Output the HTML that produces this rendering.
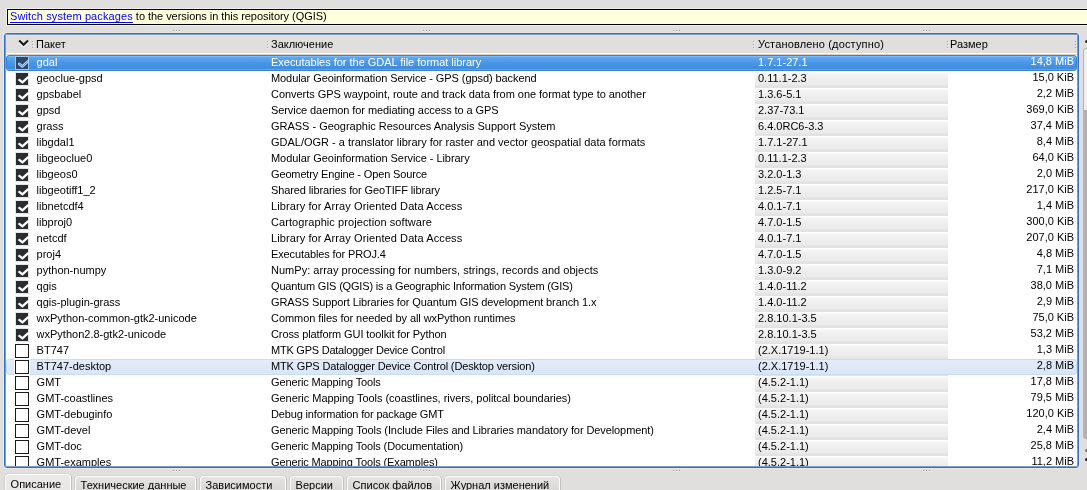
<!DOCTYPE html>
<html><head><meta charset="utf-8">
<style>
html,body{margin:0;padding:0;}
body{width:1087px;height:490px;overflow:hidden;position:relative;background:#e0dfde;font-family:"Liberation Sans",sans-serif;font-size:11px;color:#000;}
#root{position:absolute;left:0;top:0;width:1087px;height:490px;will-change:transform;overflow:hidden;}
.banner{position:absolute;left:7px;top:9px;width:1100px;height:14px;border:1px solid #000;background:#ffffdd;box-shadow:0 0 0 1px rgba(255,255,255,0.45);}
.banner span{position:absolute;left:2px;top:-1px;line-height:14px;white-space:nowrap;}
.banner a{color:#0000ff;text-decoration:underline;text-underline-offset:2px;}
.bsh{position:absolute;left:0;top:25px;width:1087px;height:1px;background:#ecebea;}
.dots{position:absolute;height:2px;width:8px;}
.dots i{position:absolute;top:0;width:1px;height:1px;background:#9e9c9a;box-shadow:0 1px 0 #f4f3f2;}
.frame{position:absolute;left:4px;top:33px;width:1073px;height:433px;border:1px solid #2e72c6;border-radius:3px;background:#fff;overflow:hidden;box-shadow:inset 0 0 0 1px rgba(45,95,165,0.62), 0 0 0 1px rgba(245,240,235,0.45);}
.hdr{position:absolute;left:1px;top:1px;width:1071px;height:18px;background:#e0dfde;border-top:1px solid #e7e4e1;}
.hdr span{position:absolute;top:0;line-height:17px;white-space:nowrap;}
.hsep{position:absolute;top:5px;width:1px;height:8px;}
.hsep i{position:absolute;left:0;width:1px;height:1px;background:#a8a6a4;box-shadow:1px 1px 0 #f2f1f0;}
.hline{position:absolute;left:1px;top:19px;width:1071px;height:1px;background:#fff;}
.hsh{position:absolute;left:1px;top:20px;width:1071px;height:1px;background:#d8d0c8;}
.row{position:absolute;left:0px;width:1087px;height:16px;}
.row span{position:absolute;top:-1px;line-height:16px;white-space:nowrap;}
.sel span{color:#fff;}
.c1{left:36.6px;} .c2{left:271px;} .c3{left:758px;} .c4{right:13px;text-align:right;margin-top:-1px;}
.vg{position:absolute;left:755px;top:1px;width:193px;height:16px;background:linear-gradient(#ffffff 0px,#f5f5f5 2px,#eeeeee 7px,#eaeaea 12.5px,#e5e5e5 13.5px,#e1e1e1 16px);}
.hl{display:none;}
.cb{position:absolute;left:15px;top:1px;width:14px;height:14px;box-sizing:border-box;border:1px solid #1a1a1a;background:#fff;}
.cb.on{border-color:#e6e6e6;background:#2a2d30;}
.sel .cb.on{border-color:#a6c8ee;background:#2c4a6c;}
.cb svg{position:absolute;left:-1px;top:-1px;overflow:visible;}
.sel .vg,.hov .vg{}
.sel .hl{display:block;position:absolute;left:6px;top:0;width:1071px;height:16px;box-sizing:border-box;border:1px solid #3a7fd0;border-radius:3px;background:linear-gradient(#5eacf6,#4a96e6 50%,#3f88d8);box-shadow:inset 0 1px 0 #7cbcfa, inset 0 -1px 0 #6aa2e0;}
.sel .vg{display:none;}
.hov .hl{display:block;position:absolute;left:6px;top:0;width:1071px;height:16px;box-sizing:border-box;border:1px solid #cadcf2;border-radius:3px;background:linear-gradient(#e3edf9,#d9e6f6);}
.hov .cb{box-shadow:0 0 0 1px rgba(255,255,255,0.85);}
.sbh{position:absolute;left:1083px;top:48px;width:8px;height:62px;border:1px solid #b4b2b0;border-radius:3px;background:linear-gradient(90deg,#f2f1f0,#e8e7e6);}
.sbg{position:absolute;left:1083px;top:110px;width:8px;height:329px;border-radius:0 0 3px 3px;background:linear-gradient(90deg,#b8b6b4,#a6a4a2);}
.tab{position:absolute;top:476px;height:20px;box-sizing:border-box;border:1px solid #fdfdfc;border-bottom:none;border-radius:4px 4px 0 0;background:linear-gradient(#e5e4e3,#d5d4d3);box-shadow:1px 0 0 #c2c0be,-1px 0 0 #d0cecc,0 -1px 0 #d6d4d2;}
.tab.act{top:474px;background:linear-gradient(#ebeae9,#e7e6e5);}
.tab span{position:absolute;left:4.6px;top:1px;line-height:14px;white-space:nowrap;font-size:11px;}
.tab.act span{top:2px;}
</style></head><body><div id="root">
<div class="banner"><span><a style="letter-spacing:0.11px">Switch system packages</a><span style="position:static;letter-spacing:-0.045px"> to the versions in this repository (QGIS)</span></span></div>
<div class="dots" style="left:173px;top:30px"><i style="left:0"></i><i style="left:3px"></i><i style="left:6px"></i></div>
<div class="dots" style="left:423px;top:30px"><i style="left:0"></i><i style="left:3px"></i><i style="left:6px"></i></div>
<div class="dots" style="left:673px;top:30px"><i style="left:0"></i><i style="left:3px"></i><i style="left:6px"></i></div>
<div class="dots" style="left:923px;top:30px"><i style="left:0"></i><i style="left:3px"></i><i style="left:6px"></i></div>

<div class="frame">
<div class="hdr">
<svg style="position:absolute;left:12px;top:3px;overflow:visible" width="12" height="8" viewBox="0 0 12 8"><path d="M1.2 1.5 L5.6 5.8 L10 1.5" fill="none" stroke="#fff" stroke-opacity="0.7" stroke-width="2.4" transform="translate(0,1)"/><path d="M1.2 1.5 L5.6 5.8 L10 1.5" fill="none" stroke="#151515" stroke-width="2"/></svg>
<div class="hsep" style="left:26px"><i style="top:0"></i><i style="top:3px"></i><i style="top:6px"></i></div><span style="left:30px">Пакет</span>
<div class="hsep" style="left:261px"><i style="top:0"></i><i style="top:3px"></i><i style="top:6px"></i></div><span style="left:265px">Заключение</span>
<div class="hsep" style="left:747px"><i style="top:0"></i><i style="top:3px"></i><i style="top:6px"></i></div><span style="left:752px;letter-spacing:0.16px">Установлено (доступно)</span>
<div class="hsep" style="left:941px"><i style="top:0"></i><i style="top:3px"></i><i style="top:6px"></i></div><span style="left:944px">Размер</span>
<div class="hsep" style="left:1069px"><i style="top:0"></i><i style="top:3px"></i><i style="top:6px"></i></div>
</div>
<div class="hline"></div><div class="hsh"></div>
</div>
<div style="position:absolute;left:5px;top:55px;width:1072px;height:411px;overflow:hidden;">
<div style="position:absolute;left:-5px;top:-55px;width:1087px;height:490px;">
<div class="row sel" style="top:55px"><div class="vg"></div><div class="hl"></div><div class="cb on"><svg class="ck" width="15" height="15" viewBox="0 0 15 15"><path d="M4.3 7.9 L7.4 10.4 L12.9 5.4" fill="none" stroke="#c8e0fa" stroke-width="2.6" stroke-linecap="round" stroke-linejoin="round"/><path d="M4.3 7.9 L7.4 10.4 L12.9 5.4" fill="none" stroke="#3d8ee0" stroke-width="1.0" stroke-linecap="round" stroke-linejoin="round"/></svg></div><span class="c1">gdal</span><span class="c2" style="letter-spacing:-0.023px">Executables for the GDAL file format library</span><span class="c3">1.7.1-27.1</span><span class="c4">14,8 MiB</span></div><div class="row" style="top:71px"><div class="vg"></div><div class="hl"></div><div class="cb on"><svg class="ck" width="15" height="15" viewBox="0 0 15 15"><path d="M4.3 7.9 L7.4 10.4 L12.9 5.4" fill="none" stroke="#fff" stroke-width="2.3" stroke-linecap="round" stroke-linejoin="round"/></svg></div><span class="c1">geoclue-gpsd</span><span class="c2" style="letter-spacing:-0.080px">Modular Geoinformation Service - GPS (gpsd) backend</span><span class="c3">0.11.1-2.3</span><span class="c4">15,0 KiB</span></div><div class="row" style="top:87px"><div class="vg"></div><div class="hl"></div><div class="cb on"><svg class="ck" width="15" height="15" viewBox="0 0 15 15"><path d="M4.3 7.9 L7.4 10.4 L12.9 5.4" fill="none" stroke="#fff" stroke-width="2.3" stroke-linecap="round" stroke-linejoin="round"/></svg></div><span class="c1">gpsbabel</span><span class="c2" style="letter-spacing:-0.041px">Converts GPS waypoint, route and track data from one format type to another</span><span class="c3">1.3.6-5.1</span><span class="c4">2,2 MiB</span></div><div class="row" style="top:103px"><div class="vg"></div><div class="hl"></div><div class="cb on"><svg class="ck" width="15" height="15" viewBox="0 0 15 15"><path d="M4.3 7.9 L7.4 10.4 L12.9 5.4" fill="none" stroke="#fff" stroke-width="2.3" stroke-linecap="round" stroke-linejoin="round"/></svg></div><span class="c1">gpsd</span><span class="c2" style="letter-spacing:-0.081px">Service daemon for mediating access to a GPS</span><span class="c3">2.37-73.1</span><span class="c4">369,0 KiB</span></div><div class="row" style="top:119px"><div class="vg"></div><div class="hl"></div><div class="cb on"><svg class="ck" width="15" height="15" viewBox="0 0 15 15"><path d="M4.3 7.9 L7.4 10.4 L12.9 5.4" fill="none" stroke="#fff" stroke-width="2.3" stroke-linecap="round" stroke-linejoin="round"/></svg></div><span class="c1">grass</span><span class="c2" style="letter-spacing:-0.020px">GRASS - Geographic Resources Analysis Support System</span><span class="c3">6.4.0RC6-3.3</span><span class="c4">37,4 MiB</span></div><div class="row" style="top:135px"><div class="vg"></div><div class="hl"></div><div class="cb on"><svg class="ck" width="15" height="15" viewBox="0 0 15 15"><path d="M4.3 7.9 L7.4 10.4 L12.9 5.4" fill="none" stroke="#fff" stroke-width="2.3" stroke-linecap="round" stroke-linejoin="round"/></svg></div><span class="c1">libgdal1</span><span class="c2" style="letter-spacing:-0.007px">GDAL/OGR - a translator library for raster and vector geospatial data formats</span><span class="c3">1.7.1-27.1</span><span class="c4">8,4 MiB</span></div><div class="row" style="top:151px"><div class="vg"></div><div class="hl"></div><div class="cb on"><svg class="ck" width="15" height="15" viewBox="0 0 15 15"><path d="M4.3 7.9 L7.4 10.4 L12.9 5.4" fill="none" stroke="#fff" stroke-width="2.3" stroke-linecap="round" stroke-linejoin="round"/></svg></div><span class="c1">libgeoclue0</span><span class="c2" style="letter-spacing:-0.064px">Modular Geoinformation Service - Library</span><span class="c3">0.11.1-2.3</span><span class="c4">64,0 KiB</span></div><div class="row" style="top:167px"><div class="vg"></div><div class="hl"></div><div class="cb on"><svg class="ck" width="15" height="15" viewBox="0 0 15 15"><path d="M4.3 7.9 L7.4 10.4 L12.9 5.4" fill="none" stroke="#fff" stroke-width="2.3" stroke-linecap="round" stroke-linejoin="round"/></svg></div><span class="c1">libgeos0</span><span class="c2" style="letter-spacing:-0.143px">Geometry Engine - Open Source</span><span class="c3">3.2.0-1.3</span><span class="c4">2,0 MiB</span></div><div class="row" style="top:183px"><div class="vg"></div><div class="hl"></div><div class="cb on"><svg class="ck" width="15" height="15" viewBox="0 0 15 15"><path d="M4.3 7.9 L7.4 10.4 L12.9 5.4" fill="none" stroke="#fff" stroke-width="2.3" stroke-linecap="round" stroke-linejoin="round"/></svg></div><span class="c1">libgeotiff1_2</span><span class="c2" style="letter-spacing:-0.114px">Shared libraries for GeoTIFF library</span><span class="c3">1.2.5-7.1</span><span class="c4">217,0 KiB</span></div><div class="row" style="top:199px"><div class="vg"></div><div class="hl"></div><div class="cb on"><svg class="ck" width="15" height="15" viewBox="0 0 15 15"><path d="M4.3 7.9 L7.4 10.4 L12.9 5.4" fill="none" stroke="#fff" stroke-width="2.3" stroke-linecap="round" stroke-linejoin="round"/></svg></div><span class="c1">libnetcdf4</span><span class="c2" style="letter-spacing:0.095px">Library for Array Oriented Data Access</span><span class="c3">4.0.1-7.1</span><span class="c4">1,4 MiB</span></div><div class="row" style="top:215px"><div class="vg"></div><div class="hl"></div><div class="cb on"><svg class="ck" width="15" height="15" viewBox="0 0 15 15"><path d="M4.3 7.9 L7.4 10.4 L12.9 5.4" fill="none" stroke="#fff" stroke-width="2.3" stroke-linecap="round" stroke-linejoin="round"/></svg></div><span class="c1">libproj0</span><span class="c2" style="letter-spacing:0.081px">Cartographic projection software</span><span class="c3">4.7.0-1.5</span><span class="c4">300,0 KiB</span></div><div class="row" style="top:231px"><div class="vg"></div><div class="hl"></div><div class="cb on"><svg class="ck" width="15" height="15" viewBox="0 0 15 15"><path d="M4.3 7.9 L7.4 10.4 L12.9 5.4" fill="none" stroke="#fff" stroke-width="2.3" stroke-linecap="round" stroke-linejoin="round"/></svg></div><span class="c1">netcdf</span><span class="c2" style="letter-spacing:0.095px">Library for Array Oriented Data Access</span><span class="c3">4.0.1-7.1</span><span class="c4">207,0 KiB</span></div><div class="row" style="top:247px"><div class="vg"></div><div class="hl"></div><div class="cb on"><svg class="ck" width="15" height="15" viewBox="0 0 15 15"><path d="M4.3 7.9 L7.4 10.4 L12.9 5.4" fill="none" stroke="#fff" stroke-width="2.3" stroke-linecap="round" stroke-linejoin="round"/></svg></div><span class="c1">proj4</span><span class="c2" style="letter-spacing:-0.119px">Executables for PROJ.4</span><span class="c3">4.7.0-1.5</span><span class="c4">4,8 MiB</span></div><div class="row" style="top:263px"><div class="vg"></div><div class="hl"></div><div class="cb on"><svg class="ck" width="15" height="15" viewBox="0 0 15 15"><path d="M4.3 7.9 L7.4 10.4 L12.9 5.4" fill="none" stroke="#fff" stroke-width="2.3" stroke-linecap="round" stroke-linejoin="round"/></svg></div><span class="c1">python-numpy</span><span class="c2" style="letter-spacing:0.023px">NumPy: array processing for numbers, strings, records and objects</span><span class="c3">1.3.0-9.2</span><span class="c4">7,1 MiB</span></div><div class="row" style="top:279px"><div class="vg"></div><div class="hl"></div><div class="cb on"><svg class="ck" width="15" height="15" viewBox="0 0 15 15"><path d="M4.3 7.9 L7.4 10.4 L12.9 5.4" fill="none" stroke="#fff" stroke-width="2.3" stroke-linecap="round" stroke-linejoin="round"/></svg></div><span class="c1">qgis</span><span class="c2" style="letter-spacing:-0.181px">Quantum GIS (QGIS) is a Geographic Information System (GIS)</span><span class="c3">1.4.0-11.2</span><span class="c4">38,0 MiB</span></div><div class="row" style="top:295px"><div class="vg"></div><div class="hl"></div><div class="cb on"><svg class="ck" width="15" height="15" viewBox="0 0 15 15"><path d="M4.3 7.9 L7.4 10.4 L12.9 5.4" fill="none" stroke="#fff" stroke-width="2.3" stroke-linecap="round" stroke-linejoin="round"/></svg></div><span class="c1">qgis-plugin-grass</span><span class="c2" style="letter-spacing:-0.107px">GRASS Support Libraries for Quantum GIS development branch 1.x</span><span class="c3">1.4.0-11.2</span><span class="c4">2,9 MiB</span></div><div class="row" style="top:311px"><div class="vg"></div><div class="hl"></div><div class="cb on"><svg class="ck" width="15" height="15" viewBox="0 0 15 15"><path d="M4.3 7.9 L7.4 10.4 L12.9 5.4" fill="none" stroke="#fff" stroke-width="2.3" stroke-linecap="round" stroke-linejoin="round"/></svg></div><span class="c1">wxPython-common-gtk2-unicode</span><span class="c2" style="letter-spacing:-0.064px">Common files for needed by all wxPython runtimes</span><span class="c3">2.8.10.1-3.5</span><span class="c4">75,0 KiB</span></div><div class="row" style="top:327px"><div class="vg"></div><div class="hl"></div><div class="cb on"><svg class="ck" width="15" height="15" viewBox="0 0 15 15"><path d="M4.3 7.9 L7.4 10.4 L12.9 5.4" fill="none" stroke="#fff" stroke-width="2.3" stroke-linecap="round" stroke-linejoin="round"/></svg></div><span class="c1">wxPython2.8-gtk2-unicode</span><span class="c2" style="letter-spacing:-0.097px">Cross platform GUI toolkit for Python</span><span class="c3">2.8.10.1-3.5</span><span class="c4">53,2 MiB</span></div><div class="row" style="top:343px"><div class="vg"></div><div class="hl"></div><div class="cb"></div><span class="c1">BT747</span><span class="c2" style="letter-spacing:-0.234px">MTK GPS Datalogger Device Control</span><span class="c3">(2.X.1719-1.1)</span><span class="c4">1,3 MiB</span></div><div class="row hov" style="top:359px"><div class="vg"></div><div class="hl"></div><div class="cb"></div><span class="c1">BT747-desktop</span><span class="c2" style="letter-spacing:-0.140px">MTK GPS Datalogger Device Control (Desktop version)</span><span class="c3">(2.X.1719-1.1)</span><span class="c4">2,8 MiB</span></div><div class="row" style="top:375px"><div class="vg"></div><div class="hl"></div><div class="cb"></div><span class="c1">GMT</span><span class="c2" style="letter-spacing:-0.125px">Generic Mapping Tools</span><span class="c3">(4.5.2-1.1)</span><span class="c4">17,8 MiB</span></div><div class="row" style="top:391px"><div class="vg"></div><div class="hl"></div><div class="cb"></div><span class="c1">GMT-coastlines</span><span class="c2" style="letter-spacing:-0.040px">Generic Mapping Tools (coastlines, rivers, politcal boundaries)</span><span class="c3">(4.5.2-1.1)</span><span class="c4">79,5 MiB</span></div><div class="row" style="top:407px"><div class="vg"></div><div class="hl"></div><div class="cb"></div><span class="c1">GMT-debuginfo</span><span class="c2" style="letter-spacing:-0.156px">Debug information for package GMT</span><span class="c3">(4.5.2-1.1)</span><span class="c4">120,0 KiB</span></div><div class="row" style="top:423px"><div class="vg"></div><div class="hl"></div><div class="cb"></div><span class="c1">GMT-devel</span><span class="c2" style="letter-spacing:-0.092px">Generic Mapping Tools (Include Files and Libraries mandatory for Development)</span><span class="c3">(4.5.2-1.1)</span><span class="c4">2,4 MiB</span></div><div class="row" style="top:439px"><div class="vg"></div><div class="hl"></div><div class="cb"></div><span class="c1">GMT-doc</span><span class="c2" style="letter-spacing:-0.125px">Generic Mapping Tools (Documentation)</span><span class="c3">(4.5.2-1.1)</span><span class="c4">25,8 MiB</span></div><div class="row" style="top:455px"><div class="vg"></div><div class="hl"></div><div class="cb"></div><span class="c1">GMT-examples</span><span class="c2" style="letter-spacing:-0.129px">Generic Mapping Tools (Examples)</span><span class="c3">(4.5.2-1.1)</span><span class="c4">11,2 MiB</span></div>
</div></div>
<div class="sbh"></div><div class="sbg"></div>
<div style="position:absolute;left:1085px;top:40px;width:3px;height:3px;border-radius:50%;background:#333"></div>
<div style="position:absolute;left:1085px;top:449px;width:3px;height:3px;border-radius:50%;background:#777"></div>
<div style="position:absolute;left:1085px;top:458px;width:3px;height:3px;border-radius:50%;background:#222"></div>
<div class="dots" style="left:173px;top:470px"><i style="left:0"></i><i style="left:3px"></i><i style="left:6px"></i></div>
<div class="dots" style="left:423px;top:470px"><i style="left:0"></i><i style="left:3px"></i><i style="left:6px"></i></div>
<div class="dots" style="left:673px;top:470px"><i style="left:0"></i><i style="left:3px"></i><i style="left:6px"></i></div>
<div class="dots" style="left:923px;top:470px"><i style="left:0"></i><i style="left:3px"></i><i style="left:6px"></i></div>

<div class="tab act" style="left:5px;width:66px"><span>Описание</span></div>
<div class="tab" style="left:75px;width:121px"><span>Технические данные</span></div>
<div class="tab" style="left:200px;width:86px"><span>Зависимости</span></div>
<div class="tab" style="left:290px;width:53px"><span>Версии</span></div>
<div class="tab" style="left:347px;width:94px"><span>Список файлов</span></div>
<div class="tab" style="left:445px;width:115px"><span>Журнал изменений</span></div>
</div></body></html>
